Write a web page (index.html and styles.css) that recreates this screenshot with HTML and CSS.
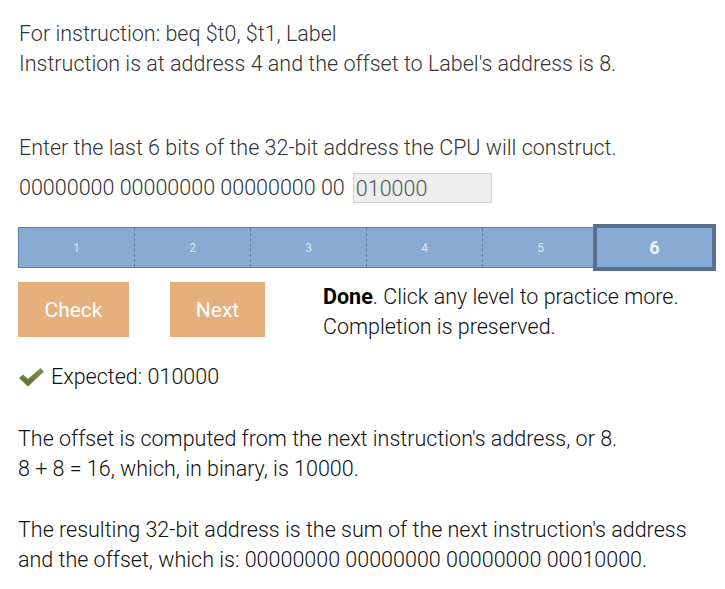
FILE: index.html
```html
<!DOCTYPE html>
<html>
<head>
<meta charset="utf-8">
<link rel="stylesheet" href="styles.css">
</head>
<body>
<div class="page">
  <div class="prompt">
    <div>For instruction: beq $t0, $t1, Label</div>
    <div>Instruction is at address 4 and the offset to Label's address is 8.</div>
  </div>
  <div class="question">
    <div>Enter the last 6 bits of the 32-bit address the CPU will construct.</div>
    <div class="answer-row"><span>00000000 00000000 00000000 00</span><input class="bits" type="text" value="010000" disabled></div>
  </div>
  <div class="levels">
    <div class="level">1</div>
    <div class="level">2</div>
    <div class="level">3</div>
    <div class="level">4</div>
    <div class="level">5</div>
    <div class="level current">6</div>
  </div>
  <div class="controls">
    <button class="btn check">Check</button>
    <button class="btn next">Next</button>
    <div class="status"><b>Done</b>. Click any level to practice more.<br>Completion is preserved.</div>
  </div>
  <div class="expected">
    <svg class="tick" width="27" height="20" viewBox="0 0 27 20"><defs><linearGradient id="g" x1="0" y1="0" x2="0" y2="1"><stop offset="0" stop-color="#7f934a"/><stop offset="1" stop-color="#5f7030"/></linearGradient></defs><path d="M1 11 L5 7.5 L10 12 L22.5 1 L26 4.5 L10 19.5 Z" fill="url(#g)"/></svg>
    <span>Expected: 010000</span>
  </div>
  <div class="explain">
    <p>The offset is computed from the next instruction's address, or 8.<br>8 + 8 = 16, which, in binary, is 10000.</p>
    <p>The resulting 32-bit address is the sum of the next instruction's address and the offset, which is: 00000000 00000000 00000000 00010000.</p>
  </div>
</div>
</body>
</html>
```
FILE: styles.css
```css
html, body { margin: 0; padding: 0; background: #fff; }
body {
  font-family: Roboto, "Noto Sans", sans-serif;
  font-weight: 300;
  font-size: 21.5px;
  line-height: 30px;
  color: #333;
}
.page { padding: 19px 10px 0 18px; }
.prompt { padding-left: 1px; }
.question { margin-top: 54px; padding-left: 1px; }
.answer-row { display: flex; align-items: center; margin-top: 10px; height: 30px; }
.answer-row span { margin-right: 8px; }
.bits {
  width: 139px; height: 30px; box-sizing: border-box;
  font: 300 21.5px/28px Roboto, sans-serif; color: #555;
  background: #eee; border: 1px solid #cdd3d6; padding: 0 2px;
}
.levels {
  display: flex; margin-top: 24px; width: 697px; height: 41px;
  border: 1px solid #5b7fa6; background: #87abd2; box-sizing: border-box;
}
.level {
  flex: 1; display: flex; align-items: center; justify-content: center;
  font: 400 12px Roboto, sans-serif; color: #dfe8f2;
  border-left: 1px dashed #5b7fa6;
}
.level:first-child { border-left: none; }
.level.current {
  flex: 0 0 123px; margin: -4px -2px -4px -5px; border: 4px solid #5a6e8e;
  font-weight: 700; font-size: 18px; color: #eef3f8;
  box-sizing: border-box; position: relative;
}
.controls { display: flex; align-items: flex-start; margin-top: 14px; }
.btn {
  height: 55px; border: none; background: #e5b07e; color: #fff;
  font: 400 21px Roboto, sans-serif; padding: 0;
}
.check { width: 111px; }
.next { width: 95px; margin-left: 41px; }
.status { margin-left: 58px; color: #111; margin-top: 0; }
.status b { font-weight: 700; color: #000; }
.expected { display: flex; align-items: center; margin-top: 20px; color: #111; }
.tick { margin-right: 6px; }
.explain { color: #111; margin-top: 32px; }
.explain p { margin: 0 0 31px; width: 695px; }
```
